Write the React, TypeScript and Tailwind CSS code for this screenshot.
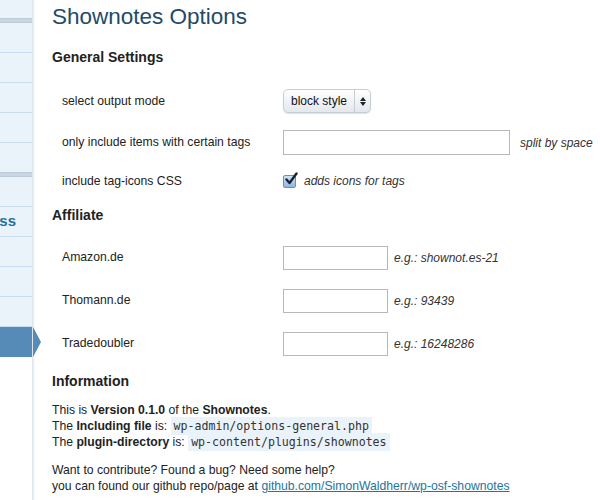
import React from 'react'

const SANS = { fontFamily: '"Liberation Sans", Arial, Helvetica, sans-serif' }

function MenuItem({ children, active = false }: { children?: React.ReactNode; active?: boolean }) {
  if (active) {
    return (
      <div className="relative h-[30px] bg-[#558bb6]">
        <div className="h-full overflow-hidden flex items-center justify-end">
          <span className="text-white text-[13px] mr-[32px] whitespace-nowrap">Shown</span>
        </div>
        {/* arrow pointing into the page */}
        <div className="absolute left-[33px] top-0 w-0 h-0 border-l-[8px] border-l-[#558bb6] border-y-[15px] border-y-transparent" />
      </div>
    )
  }
  return (
    <div className="h-[30px] border-b border-[#c8def0] overflow-hidden flex items-center justify-end">
      {children}
    </div>
  )
}

function Band() {
  return <div className="h-[5px] bg-[#c9d6e1] border-y border-[#bccbd8]" />
}

function Row({ label, h, children }: { label: string; h: string; children?: React.ReactNode }) {
  return (
    <div className={`flex items-center ${h}`}>
      <div className="w-[231px] pl-[10px] text-[12.2px] text-[#222]">{label}</div>
      <div className="flex items-center">{children}</div>
    </div>
  )
}

function Hint({ children, className = '' }: { children: React.ReactNode; className?: string }) {
  return <span className={`text-[12px] italic text-[#333] ${className}`}>{children}</span>
}

function Code({ children }: { children: React.ReactNode }) {
  return (
    <code
      className="bg-[#eaf2fa] px-[3px] py-[2px] text-[11.6px] text-[#333]"
      style={{ fontFamily: '"DejaVu Sans Mono", "Liberation Mono", monospace' }}
    >
      {children}
    </code>
  )
}

export default function App() {
  return (
    <div className="flex w-[600px] h-[500px] overflow-hidden bg-white" style={SANS}>
      {/* admin menu sidebar */}
      <div className="flex shrink-0">
        <div className="w-[32px] flex flex-col">
          <div className="bg-[#eaf2fa]">
            <div className="h-[18px]" />
            <Band />
            <MenuItem />
            <MenuItem />
            <MenuItem />
            <MenuItem />
            <div className="h-[29px]" />
            <Band />
            <MenuItem />
            <MenuItem>
              <span className="text-[15px] font-bold text-[#24709d] mr-[16px] whitespace-nowrap">Press</span>
            </MenuItem>
            <MenuItem />
            <MenuItem />
            <MenuItem />
          </div>
          <MenuItem active />
        </div>
        <div className="w-[3px] bg-gradient-to-r from-[#d8e0e8] to-white" />
      </div>

      {/* page content */}
      <div className="flex-1 pl-[17px]">
        <h2 className="text-[22.5px] leading-[34px] text-[#234b68] font-normal">Shownotes Options</h2>

        <h3 className="mt-[13px] text-[14px] leading-[20px] font-bold text-[#222]">General Settings</h3>

        <div className="mt-[14px]">
          <Row label="select output mode" h="h-[40px]">
            <div className="flex items-center h-[24px] w-[88px] rounded-[5px] border border-[#c4ccd4] bg-gradient-to-b from-white to-[#e3e8ed] shadow-[0_1px_1px_rgba(0,0,0,0.12)]">
              <span className="flex-1 pl-[7px] text-[12px] text-[#111]">block style</span>
              <span className="w-[16px] h-full border-l border-[#c8ced4] flex flex-col items-center justify-center gap-[1px]">
                <span className="w-0 h-0 border-x-[3px] border-x-transparent border-b-[4px] border-b-[#222]" />
                <span className="w-0 h-0 border-x-[3px] border-x-transparent border-t-[4px] border-t-[#222]" />
              </span>
            </div>
          </Row>
          <Row label="only include items with certain tags" h="h-[43px]">
            <div className="w-[227px] h-[25px] border border-[#b8b8b8] bg-white" />
            <Hint className="ml-[10px]">split by space</Hint>
          </Row>
          <Row label="include tag-icons CSS" h="h-[34px]">
            <span className="w-[13px] h-[13px] rounded-[2px] border border-[#6f8fb0] bg-gradient-to-b from-[#cfe2f6] to-[#8fb6e0] relative">
              <svg viewBox="0 0 14 14" className="absolute -top-[4px] left-[0px] w-[14px] h-[14px]">
                <path d="M2.5 7.5 L5.5 11 L12.5 1.5" fill="none" stroke="#1a2530" strokeWidth="2.4" strokeLinecap="round" strokeLinejoin="round" />
              </svg>
            </span>
            <Hint className="ml-[8px]">adds icons for tags</Hint>
          </Row>
        </div>

        <h3 className="mt-[7px] text-[14px] leading-[20px] font-bold text-[#222]">Affiliate</h3>

        <div className="mt-[11px]">
          <Row label="Amazon.de" h="h-[43px]">
            <div className="w-[105px] h-[24px] border border-[#b8b8b8] bg-white" />
            <Hint className="ml-[6px]">e.g.: shownot.es-21</Hint>
          </Row>
          <Row label="Thomann.de" h="h-[43px]">
            <div className="w-[105px] h-[24px] border border-[#b8b8b8] bg-white" />
            <Hint className="ml-[6px]">e.g.: 93439</Hint>
          </Row>
          <Row label="Tradedoubler" h="h-[43px]">
            <div className="w-[105px] h-[24px] border border-[#b8b8b8] bg-white" />
            <Hint className="ml-[6px]">e.g.: 16248286</Hint>
          </Row>
        </div>

        <h3 className="mt-[6px] text-[14px] leading-[20px] font-bold text-[#222]">Information</h3>

        <div className="mt-[11px] text-[12.2px] leading-[16px] text-[#222]">
          <p>
            This is <b>Version 0.1.0</b> of the <b>Shownotes</b>.<br />
            The <b>Including file</b> is: <Code>wp-admin/options-general.php</Code>
            <br />
            The <b>plugin-directory</b> is: <Code>wp-content/plugins/shownotes</Code>
          </p>
          <p className="mt-[12px]">
            Want to contribute? Found a bug? Need some help?
            <br />
            you can found our github repo/page at{' '}
            <a href="#" className="text-[#21759b] underline">
              github.com/SimonWaldherr/wp-osf-shownotes
            </a>
          </p>
        </div>
      </div>
    </div>
  )
}
